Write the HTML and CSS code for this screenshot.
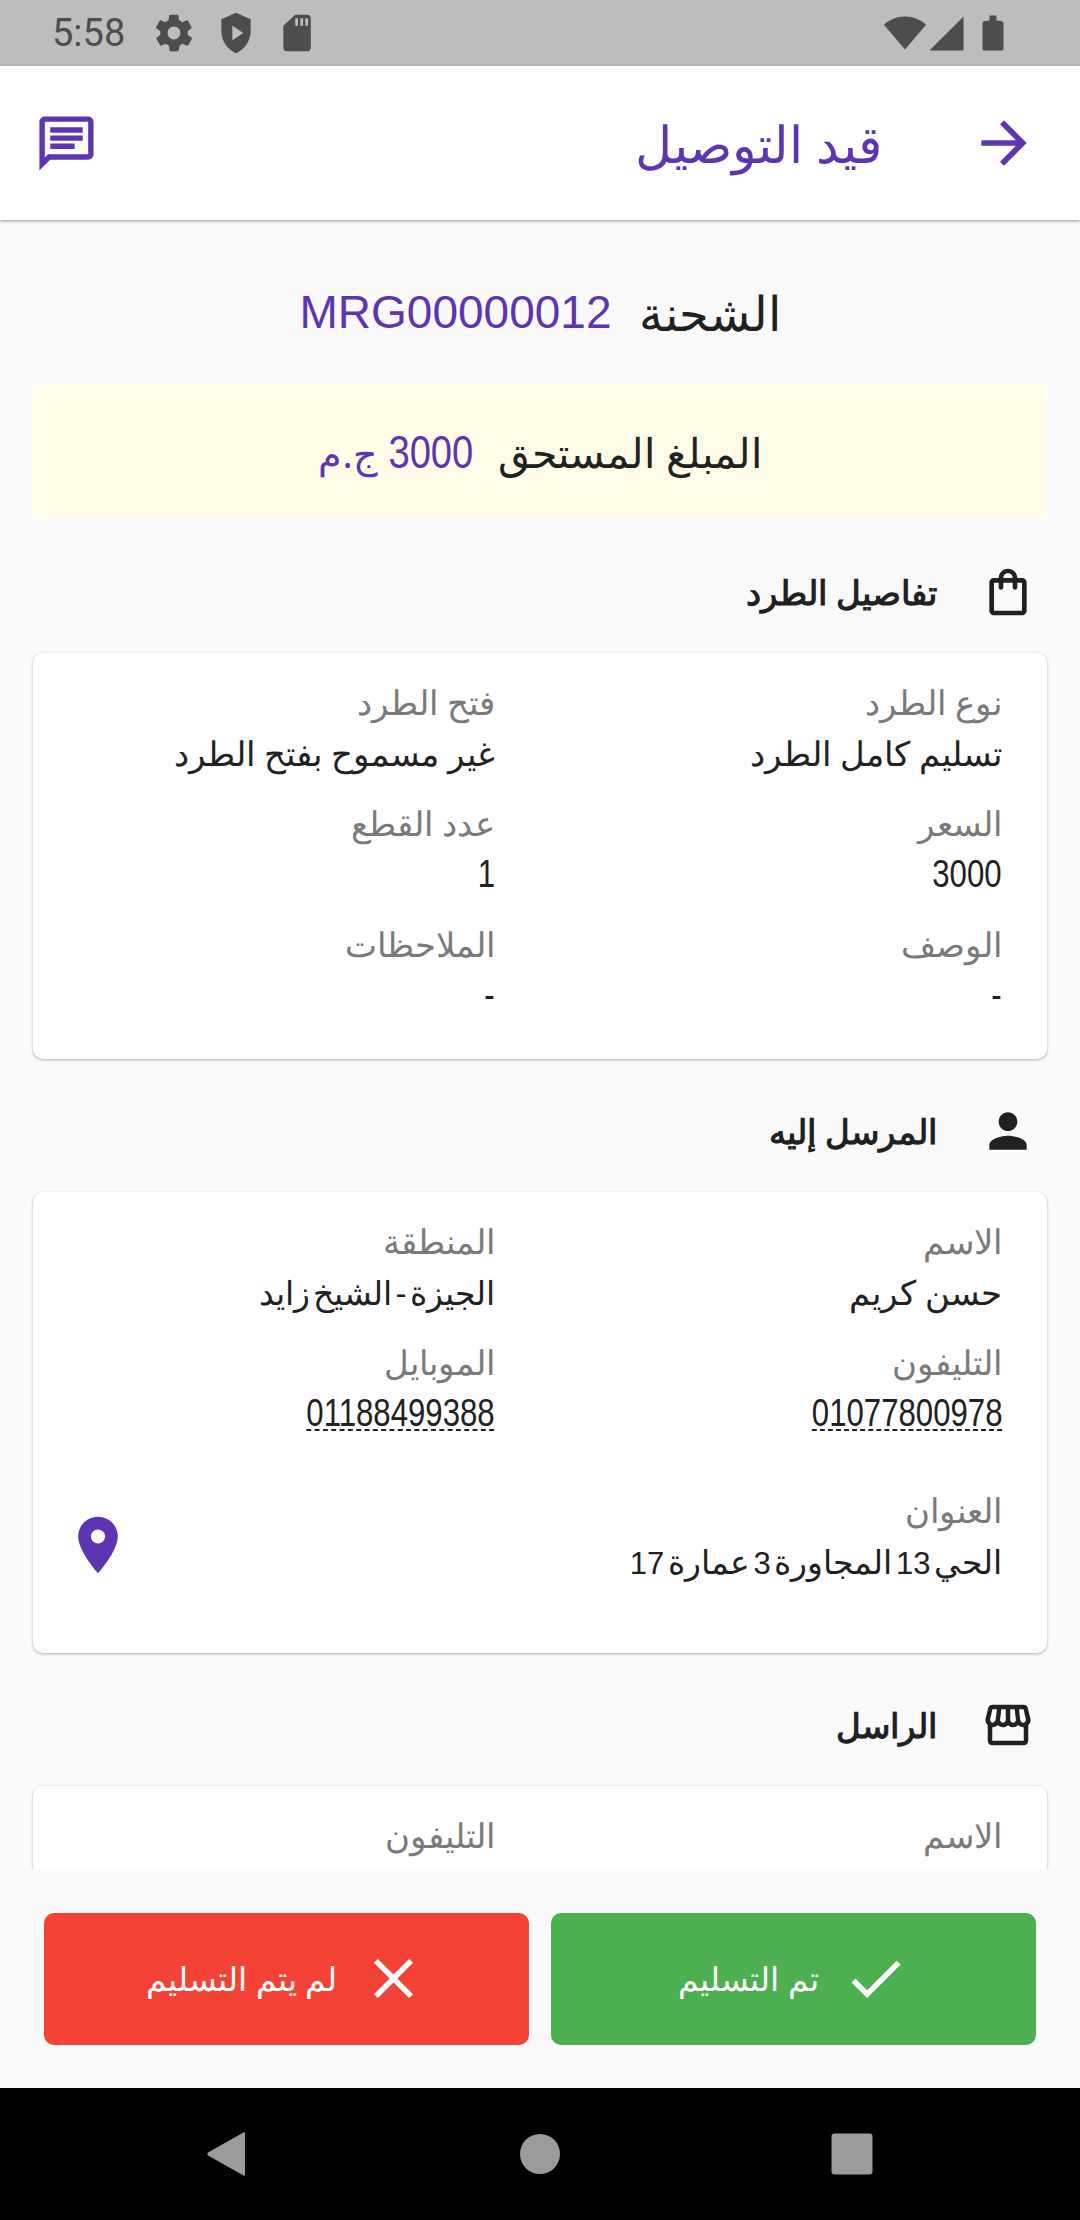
FILE: index.html
```html
<!DOCTYPE html>
<html lang="ar" dir="rtl">

<head>
    <meta charset="UTF-8">
    <meta name="viewport" content="width=device-width, initial-scale=1.0">
    <title>قيد التوصيل</title>
    <link rel="stylesheet" href="styles.css">
</head>

<body>
    <div class="phone">
        <div class="statusbar" dir="ltr">
            <span class="time">5:58</span>
            <div class="st-left">
                <svg viewBox="0 0 24 24"><path d="M19.400 13c0-.3.1-.6.1-1s0-.7-.1-1l2.100-1.600c.2-.2.2-.4.1-.6l-2-3.500c-.1-.2-.4-.3-.6-.2l-2.500 1c-.5-.4-1.100-.7-1.700-1l-.4-2.700c0-.2-.2-.4-.5-.4h-4c-.2 0-.4.2-.5.4l-.4 2.700c-.6.2-1.100.6-1.700 1l-2.500-1c-.2-.1-.5 0-.6.2l-2 3.500c-.1.2-.1.5.1.6L4.600 11c0 .3-.1.600-.1 1s0 .7.1 1l-2.100 1.600c-.2.2-.2.4-.1.6l2 3.500c.1.2.4.3.6.2l2.500-1c.5.4 1.100.7 1.700 1l.4 2.700c0 .2.2.4.5.4h4c.2 0 .4-.2.5-.4l.4-2.700c.6-.2 1.100-.6 1.700-1l2.500 1c.2.1.5 0 .6-.2l2-3.500c.1-.2.1-.5-.1-.6L19.400 13zM12 15.500c-1.900 0-3.500-1.600-3.500-3.500s1.600-3.500 3.500-3.500 3.500 1.600 3.500 3.500-1.600 3.500-3.500 3.500z"/></svg>
                <svg viewBox="0 0 24 24"><path fill-rule="evenodd" d="M12 1 4 4.500v6.500c0 5.200 3.400 10 8 12 4.600-2 8-6.800 8-12V4.500L12 1zM10 8l6 4-6 4z"/></svg>
                <svg viewBox="0 0 24 24"><path d="M17 2h-6.500L4 8v12c0 1.100.9 2 2 2h11c1.100 0 2-.9 2-2V4c0-1.100-.9-2-2-2zM12 8h-1.500V4H12v4zm2.800 0h-1.500V4h1.500v4zm2.700 0H16V4h1.500v4z"/></svg>
            </div>
            <span class="st-space"></span>
            <svg class="st-wifi" viewBox="0 0 24 24"><path d="M12 21 .5 7.500C3.500 4.800 7.500 3 12 3s8.500 1.800 11.500 4.500L12 21z"/></svg>
            <svg class="st-signal" viewBox="0 0 24 24"><path d="M2 22h20V2L2 22z"/></svg>
            <svg class="st-batt" viewBox="0 0 24 24"><path d="M16 5h-2V2h-4v3H8c-1 0-2 .6-2 1.500V21c0 .6.4 1 1 1h10c.6 0 1-.4 1-1V6.500C18 5.600 17 5 16 5z"/></svg>
        </div>

        <header class="appbar">
            <svg class="back" viewBox="0 0 24 24"><path d="M12 4l-1.400 1.400L16.200 11H4v2h12.200l-5.600 5.600L12 20l8-8z"/></svg>
            <h1>قيد التوصيل</h1>
            <svg class="chat" viewBox="0 0 24 24"><path d="M20 2H4c-1.100 0-2 .9-2 2v18l4-4h14c1.100 0 2-.9 2-2V4c0-1.100-.9-2-2-2zm0 14H5.200L4 17.200V4h16v12zM6 12h9v2H6zm0-3h12v2H6zm0-3h12v2H6z"/></svg>
        </header>

        <main class="content">
            <div class="shipment">
                <span>الشحنة</span>
                <span class="code">MRG00000012</span>
            </div>

            <div class="due">
                <span>المبلغ المستحق</span>
                <span class="due-val"><span class="due-num">3000</span> ج.م</span>
            </div>

            <div class="sec-title">
                <svg viewBox="0 0 24 24"><path d="M18 6h-2c0-2.200-1.800-4-4-4S8 3.800 8 6H6c-1.100 0-2 .9-2 2v12c0 1.100.9 2 2 2h12c1.100 0 2-.9 2-2V8c0-1.100-.9-2-2-2zm-6-2c1.100 0 2 .9 2 2h-4c0-1.100.9-2 2-2zm6 16H6V8h2v2c0 .6.4 1 1 1s1-.4 1-1V8h4v2c0 .6.4 1 1 1s1-.4 1-1V8h2v12z"/></svg>
                <span>تفاصيل الطرد</span>
            </div>
            <section class="card">
                <div class="grid">
                    <div class="field"><label>نوع الطرد</label><p>تسليم كامل الطرد</p></div>
                    <div class="field"><label>فتح الطرد</label><p>غير مسموح بفتح الطرد</p></div>
                    <div class="field"><label>السعر</label><p><span class="num">3000</span></p></div>
                    <div class="field"><label>عدد القطع</label><p><span class="num">1</span></p></div>
                    <div class="field"><label>الوصف</label><p><span class="num">-</span></p></div>
                    <div class="field"><label>الملاحظات</label><p><span class="num">-</span></p></div>
                </div>
            </section>

            <div class="sec-title">
                <svg viewBox="0 0 24 24"><path d="M12 12c2.200 0 4-1.800 4-4s-1.800-4-4-4-4 1.800-4 4 1.800 4 4 4zm0 2c-2.700 0-8 1.300-8 4v2h16v-2c0-2.700-5.300-4-8-4z"/></svg>
                <span>المرسل إليه</span>
            </div>
            <section class="card">
                <div class="grid">
                    <div class="field"><label>الاسم</label><p>حسن كريم</p></div>
                    <div class="field"><label>المنطقة</label><p class="tight">الجيزة - الشيخ زايد</p></div>
                    <div class="field"><label>التليفون</label><p><a class="num" href="#">01077800978</a></p></div>
                    <div class="field"><label>الموبايل</label><p><a class="num" href="#">01188499388</a></p></div>
                </div>
                <div class="address">
                    <div class="field"><label>العنوان</label><p class="tight">الحي <span class="dig">13</span> المجاورة <span class="dig">3</span> عمارة <span class="dig">17</span></p></div>
                    <svg class="pin" viewBox="0 0 24 24"><path d="M12 2C8.100 2 5 5.100 5 9c0 5.200 7 13 7 13s7-7.800 7-13c0-3.900-3.100-7-7-7zm0 9.500a2.500 2.500 0 1 1 0-5 2.500 2.500 0 0 1 0 5z"/></svg>
                </div>
            </section>

            <div class="sec-title">
                <svg class="store" viewBox="0 0 24 24"><path d="M21.900 8.900 20.800 4.400c-.2-.9-1-1.400-1.900-1.400H5.100c-.9 0-1.700.6-1.900 1.400L2.100 8.900c-.3 1 0 2.100.6 2.900.1.100.2.200.3.300V19c0 1.100.9 2 2 2h14c1.100 0 2-.9 2-2v-6.900c.1-.1.200-.2.300-.3.700-.8.900-1.900.6-2.900zM18.900 5l1 4.300c.1.400 0 .8-.2 1.100-.1.200-.4.600-1 .6-.6 0-1.200-.6-1.300-1.300L16.900 5h2zM13 5h1.960l.54 4.520c.05.39-.07.78-.33 1.070-.22.260-.54.410-.95.410-.67 0-1.220-.590-1.220-1.310V5zM8.490 9.520 9.040 5H11v4.690c0 .72-.55 1.310-1.290 1.310-.34 0-.65-.150-.89-.410-.25-.290-.370-.680-.330-1.070zM4.050 9.360 5.100 5h1.970l-.58 4.860c-.8.650-.6 1.140-1.210 1.140-.49 0-.8-.29-.93-.47-.27-.32-.36-.76-.3-1.170zM5 19v-6.030c.08.010.15.030.23.030.87 0 1.660-.36 2.240-.95.600.600 1.400.950 2.310.950.870 0 1.650-.360 2.230-.930.590.570 1.390.930 2.290.930.840 0 1.640-.350 2.240-.950.580.590 1.370.950 2.240.950.080 0 .150-.020.230-.030V19H5z"/></svg>
                <span>الراسل</span>
            </div>
            <section class="card card-cut">
                <div class="grid">
                    <div class="field"><label>الاسم</label></div>
                    <div class="field"><label>التليفون</label></div>
                </div>
            </section>
        </main>

        <div class="actions">
            <button class="btn btn-ok">
                <svg viewBox="0 0 24 24"><path d="M9 16.200 4.800 12l-1.400 1.400L9 19 21 7l-1.400-1.400z"/></svg>
                <span>تم التسليم</span>
            </button>
            <button class="btn btn-no">
                <svg viewBox="0 0 24 24"><path d="M19 6.400 17.600 5 12 10.600 6.400 5 5 6.400 10.600 12 5 17.600 6.400 19 12 13.400 17.600 19 19 17.600 13.400 12z"/></svg>
                <span>لم يتم التسليم</span>
            </button>
        </div>

        <nav class="navbar" dir="ltr">
            <svg viewBox="0 0 24 24"><path d="M20.500 1.700v20.600c0 .6-.6.7-1 .3L2 12.700c-.4-.4-.4-1 0-1.400L19.500 1.400c.4-.4 1-.3 1 .3z"/></svg>
            <svg viewBox="0 0 24 24"><circle cx="12" cy="12" r="10"/></svg>
            <svg viewBox="0 0 24 24"><rect x="1.750" y="1.750" width="20.500" height="20.500" rx="1.500"/></svg>
        </nav>
    </div>
</body>

</html>
```

FILE: styles.css
```css
* {
    box-sizing: border-box;
}

body {
    margin: 0;
    background-color: #fafafa;
    font-family: "Noto Sans", "Liberation Sans", sans-serif;
}

.phone {
    width: 1080px;
    height: 2220px;
    display: flex;
    flex-direction: column;
    overflow: hidden;
}

/* status bar */
.statusbar {
    height: 66px;
    flex: none;
    background-color: #bdbdbd;
    display: flex;
    align-items: center;
    padding: 0 66px 0 52px;
}

.statusbar svg {
    fill: #4d4d4d;
}

.time {
    width: 100px;
    font-family: Roboto, sans-serif;
    font-size: 38px;
    color: #4d4d4d;
}

.st-left {
    display: flex;
    gap: 18px;
}

.st-left svg {
    width: 44px;
    height: 44px;
}

.st-space {
    flex: 1;
}

.st-wifi {
    width: 44px;
    height: 44px;
    margin-right: -1px;
}

.st-signal {
    width: 41px;
    height: 41px;
    margin-right: 5px;
}

.st-batt {
    width: 42px;
    height: 42px;
}

/* app bar */
.appbar {
    height: 154px;
    flex: none;
    background-color: white;
    box-shadow: 0 1px 3px rgba(0, 0, 0, 0.4);
    display: flex;
    align-items: center;
    padding: 0 42px 0 34px;
    position: relative;
}

.appbar h1 {
    flex: 1;
    margin: 0 88px;
    font-size: 51px;
    font-weight: 400;
    color: #5e35b1;
}

.back {
    width: 68px;
    height: 68px;
    fill: #5e35b1;
}

.chat {
    width: 65px;
    height: 65px;
    fill: #5e35b1;
}

/* scroll area */
.content {
    flex: 1;
    min-height: 0;
    overflow: hidden;
    padding: 0 33px;
}

.shipment {
    height: 164px;
    padding-top: 20px;
    display: flex;
    justify-content: center;
    align-items: center;
    gap: 27px;
    font-size: 48px;
    color: #212121;
}

.code {
    color: #5e35b1;
    font-family: "Liberation Sans", sans-serif;
    font-size: 46px;
}

.due {
    height: 136px;
    background-color: #fffde7;
    border-radius: 10px;
    display: flex;
    justify-content: center;
    align-items: center;
    gap: 25px;
    font-size: 41px;
    color: #212121;
}

.due-val {
    color: #5e35b1;
    font-size: 38px;
}

/* the digits in the reference are tall and narrow */
.due-num {
    display: inline-block;
    margin-left: -17px;
    font-family: "Liberation Sans", sans-serif;
    font-size: 46px;
    transform: scaleX(0.83);
    transform-origin: right center;
}

.sec-title {
    height: 133px;
    padding: 10px 11px 0;
    display: flex;
    align-items: center;
    gap: 43px;
    font-size: 34px;
    font-weight: 700;
    color: #212121;
}

.sec-title svg {
    width: 56px;
    height: 56px;
    fill: #212121;
}

.sec-title .store {
    width: 54px;
    height: 54px;
    margin: 0 1px;
}

.card {
    background-color: white;
    border-radius: 10px;
    box-shadow: 0 1px 3px rgba(0, 0, 0, 0.3);
    padding: 24px 45px 38px 31px;
}

.card-cut {
    min-height: 200px;
}

.grid {
    display: grid;
    grid-template-columns: 507px 1fr;
    row-gap: 19px;
}

.field label {
    display: block;
    font-size: 34px;
    line-height: 51px;
    color: #7a7a7a;
}

.field p {
    margin: 0;
    font-size: 34px;
    line-height: 51px;
    color: #212121;
}

.field p.tight {
    font-size: 33px;
    word-spacing: -5px;
}

.num {
    display: inline-block;
    font-family: "Liberation Sans", sans-serif;
    font-size: 38px;
    transform: scaleX(0.82);
    transform-origin: right center;
}

.field a {
    color: inherit;
    text-decoration: underline dashed 2px;
    text-underline-offset: 3px;
}

.dig {
    font-family: "Liberation Sans", sans-serif;
    font-size: 31px;
}

.address {
    display: flex;
    align-items: center;
    justify-content: space-between;
    margin-top: 46px;
    padding-bottom: 26px;
}

.pin {
    width: 68px;
    height: 68px;
    margin-top: 16px;
    fill: #5e35b1;
}

/* bottom buttons */
.actions {
    height: 219px;
    flex: none;
    background-color: #fafafa;
    display: flex;
    align-items: center;
    gap: 22px;
    padding: 0 44px;
}

.btn {
    flex: 1;
    height: 132px;
    border: none;
    border-radius: 10px;
    color: white;
    font-family: inherit;
    font-size: 33px;
    display: flex;
    align-items: center;
    justify-content: center;
    gap: 23px;
}

.btn svg {
    width: 67px;
    height: 67px;
    fill: white;
}

.btn-ok {
    background-color: #4caf50;
}

.btn-no {
    background-color: #f44336;
}

/* system nav */
.navbar {
    height: 132px;
    flex: none;
    background-color: black;
    display: flex;
    align-items: center;
    justify-content: center;
    gap: 264px;
}

.navbar svg {
    width: 48px;
    height: 48px;
    fill: #9b9b9b;
}
```
